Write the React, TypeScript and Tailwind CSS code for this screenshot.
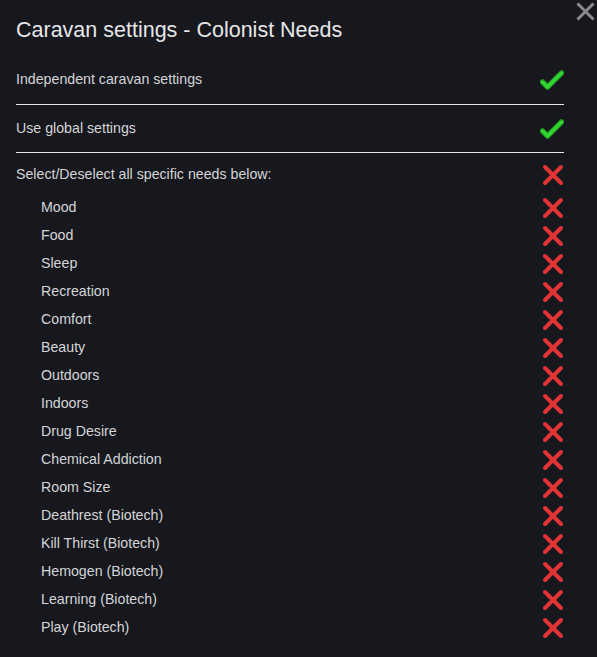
const needs = [
  'Mood',
  'Food',
  'Sleep',
  'Recreation',
  'Comfort',
  'Beauty',
  'Outdoors',
  'Indoors',
  'Drug Desire',
  'Chemical Addiction',
  'Room Size',
  'Deathrest (Biotech)',
  'Kill Thirst (Biotech)',
  'Hemogen (Biotech)',
  'Learning (Biotech)',
  'Play (Biotech)',
];

function CheckIcon() {
  return (
    <svg width="24" height="22" viewBox="0 0 24 22" className="shrink-0">
      <path
        d="M2.5 13 L7.5 18 L21.5 4"
        fill="none"
        stroke="#1f8f1f"
        strokeWidth="5.5"
        strokeLinecap="round"
        strokeLinejoin="round"
      />
      <path
        d="M2.5 13 L7.5 18 L21.5 4"
        fill="none"
        stroke="#33d433"
        strokeWidth="3.5"
        strokeLinecap="round"
        strokeLinejoin="round"
      />
    </svg>
  );
}

function CrossIcon() {
  return (
    <svg width="22" height="22" viewBox="0 0 22 22" className="shrink-0">
      <path
        d="M3 3 L19 19 M19 3 L3 19"
        fill="none"
        stroke="#e23434"
        strokeWidth="4"
        strokeLinecap="round"
      />
    </svg>
  );
}

export default function App() {
  return (
    <div
      className="relative min-h-[657px] w-full bg-[#16181e] text-[#d4d4d6]"
      style={{ fontFamily: '"Liberation Sans", Arial, sans-serif' }}
    >
      {/* close button */}
      <button className="absolute right-[2px] top-[2px] w-[19px] h-[19px]">
        <svg width="19" height="19" viewBox="0 0 19 19">
          <path d="M1.5 1.5 L17.5 17.5 M17.5 1.5 L1.5 17.5" stroke="#8a8b8f" strokeWidth="3" />
        </svg>
      </button>

      <div className="pl-4 pr-[33px] text-[14.2px]">
        <h1 className="pt-[17px] h-[56px] text-[21.5px] leading-[26px] text-[#e6e6e8]">
          Caravan settings - Colonist Needs
        </h1>

        <div className="h-[49px] flex items-center justify-between border-b border-[#e8e8e8]">
          <span>Independent caravan settings</span>
          <CheckIcon />
        </div>
        <div className="h-[48px] flex items-center justify-between border-b border-[#e8e8e8]">
          <span>Use global settings</span>
          <CheckIcon />
        </div>
        <div className="h-[41px] pt-[3px] flex items-center justify-between">
          <span>Select/Deselect all specific needs below:</span>
          <CrossIcon />
        </div>

        <div className="flex flex-col">
          {needs.map((n) => (
            <div key={n} className="h-[28px] flex items-center justify-between pl-[25px]">
              <span>{n}</span>
              <CrossIcon />
            </div>
          ))}
        </div>
      </div>
    </div>
  );
}
